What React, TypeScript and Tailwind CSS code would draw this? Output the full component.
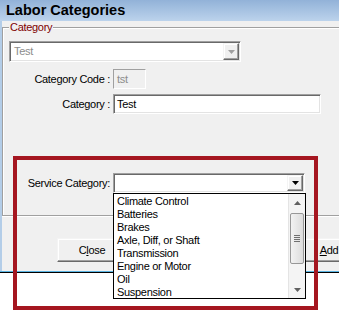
const ITEMS = [
  "Climate Control",
  "Batteries",
  "Brakes",
  "Axle, Diff, or Shaft",
  "Transmission",
  "Engine or Motor",
  "Oil",
  "Suspension",
];

const sunken =
  "border border-t-[#a0a0a0] border-l-[#a0a0a0] border-b-white border-r-white shadow-[inset_1px_1px_0_#696969,inset_-1px_-1px_0_#e3e3e3]";
const raised =
  "border border-t-[#f4f4f4] border-l-[#f4f4f4] border-b-[#696969] border-r-[#696969] shadow-[inset_-1px_-1px_0_#a0a0a0,inset_1px_1px_0_#fff] bg-[#f0f0f0]";

const Arrow = ({ color, dir = "down" }: { color: string; dir?: "up" | "down" }) => (
  <svg width="7" height="4" viewBox="0 0 7 4">
    <path d={dir === "down" ? "M0 0H7L3.5 4Z" : "M0 4H7L3.5 0Z"} fill={color} />
  </svg>
);

const Combo = ({
  width,
  height,
  text,
  disabled,
}: {
  width: string;
  height: string;
  text?: string;
  disabled?: boolean;
}) => (
  <div className={`${width} ${height} ${sunken} bg-white flex p-[1px]`}>
    <span className={`flex-1 pl-[3px] flex items-center ${disabled ? "text-[#8c8c8c]" : ""}`}>
      {text}
    </span>
    <div className={`w-[16px] h-full ${raised} flex items-center justify-center`}>
      <Arrow color={disabled ? "#a0a0a0" : "#000"} />
    </div>
  </div>
);

const Button = ({ label, hot, className }: { label: string; hot: number; className: string }) => (
  <button className={`w-[70px] h-[24px] ${raised} ${className}`}>
    {label.slice(0, hot)}
    <span className="underline">{label[hot]}</span>
    {label.slice(hot + 1)}
  </button>
);

export default function App() {
  return (
    <div className="w-[339px] h-[317px] relative overflow-hidden bg-white font-['Liberation_Sans',Arial,sans-serif] text-[11px] tracking-[-0.3px] text-black">
      <div className="w-[380px] flex flex-col">
        <div className="h-[21px] bg-linear-to-b from-[#92b2d8] to-[#bcd3ec] flex items-center pl-[6px] text-[14.5px] font-bold tracking-normal">
          Labor Categories
        </div>

        <div className="h-[250px] border-l-2 border-[#b3cde8] bg-[#f0f0f0] flex flex-col pt-[6px]">
          <div className="relative h-[189px] border-t border-l border-b border-[#a0a0a0] shadow-[inset_1px_1px_0_#fff,0_1px_0_#fff] pl-[6px] pt-[13px]">
            <span className="absolute -top-[7px] left-[6px] px-[1px] bg-[#f0f0f0] text-[#800000] leading-[13px]">
              Category
            </span>

            <Combo width="w-[232px]" height="h-[21px]" text="Test" disabled />

            <div className="grid grid-cols-[101px_auto] gap-x-[3px] gap-y-[5px] items-center mt-[7px] justify-start">
              <span className="text-right">Category Code :</span>
              <div className="w-[33px] h-[20px] border border-t-[#a0a0a0] border-l-[#a0a0a0] border-b-white border-r-white bg-[#f0f0f0] text-[#8c8c8c] pl-[3px] flex items-center">
                tst
              </div>
              <span className="text-right">Category :</span>
              <div className={`w-[208px] h-[20px] ${sunken} bg-white pl-[3px] flex items-center`}>
                Test
              </div>
            </div>

            <div className="grid grid-cols-[101px_auto] gap-x-[3px] items-center mt-[59px] justify-start">
              <span className="text-right">Service Category:</span>
              <Combo width="w-[192px]" height="h-[20px]" />
            </div>
          </div>

          <div className="flex mt-[22px]">
            <Button label="Close" hot={1} className="ml-[55px]" />
            <Button label="Add" hot={0} className="ml-[167px] shrink-0" />
          </div>
        </div>

        <div className="h-[1px] bg-[#5ab4e2]" />
        <div className="h-[1px] bg-black" />
      </div>

      <div className="absolute left-[113px] top-[193px] w-[193px] h-[106px] border border-black bg-white flex overflow-hidden">
        <ul className="flex-1 pt-[1px]">
          {ITEMS.map((item) => (
            <li key={item} className="h-[13px] leading-[13px] pl-[3px] whitespace-nowrap">
              {item}
            </li>
          ))}
        </ul>
        <div className="w-[17px] h-full bg-[#f4f4f4] border-l border-[#e4e4e4] flex flex-col items-center">
          <div className="h-[17px] flex items-center justify-center">
            <Arrow color="#606060" dir="up" />
          </div>
          <div className="mt-[2px] w-[14px] h-[51px] rounded-[2px] border border-[#979797] bg-linear-to-r from-[#f2f2f2] to-[#dcdcdc] flex flex-col items-center justify-center gap-[1px]">
            <div className="w-[6px] h-[1px] bg-[#6f6f6f]" />
            <div className="w-[6px] h-[1px] bg-[#6f6f6f]" />
            <div className="w-[6px] h-[1px] bg-[#6f6f6f]" />
            <div className="w-[6px] h-[1px] bg-[#6f6f6f]" />
          </div>
          <div className="flex-1" />
          <div className="h-[17px] flex items-center justify-center">
            <Arrow color="#606060" />
          </div>
        </div>
      </div>

      <div className="absolute left-[13px] top-[156px] w-[305px] h-[154px] border-4 border-[#a51620] pointer-events-none" />
    </div>
  );
}
